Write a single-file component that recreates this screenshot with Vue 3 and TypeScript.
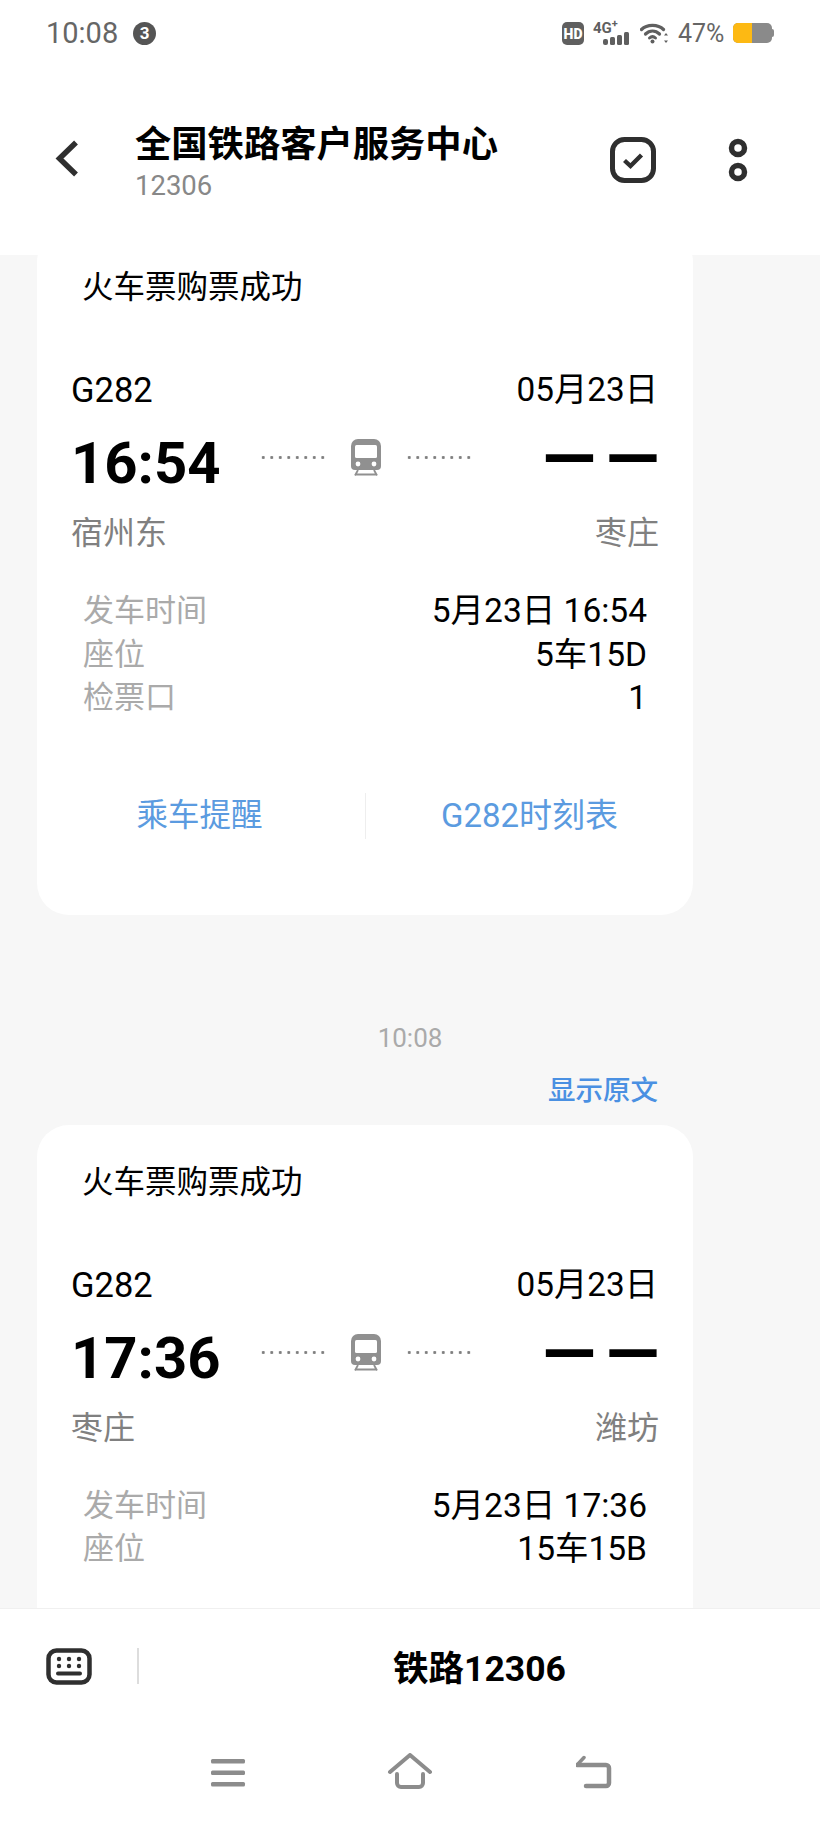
<template>
  <div class="phone">
    <header class="top">
      <div class="status">
        <div class="status-left">
          <span class="clock">10:08</span>
          <span class="badge">3</span>
        </div>
        <div class="status-right">
          <svg class="ic-hd" width="22" height="23" viewBox="0 0 22 23">
            <rect width="22" height="23" rx="5" fill="#5f5f5f" />
            <text x="11" y="16.5" text-anchor="middle" class="hd-text">HD</text>
          </svg>
          <div class="net">
            <span class="net-label">4G<sup>+</sup></span>
            <svg class="net-bars" width="27" height="13" viewBox="0 0 27 13">
              <rect x="0" y="7" width="5" height="6" rx="2" fill="#5f5f5f" />
              <rect x="7" y="5" width="5" height="8" rx="1.5" fill="#5f5f5f" />
              <rect x="14" y="3" width="5" height="10" rx="1.5" fill="#5f5f5f" />
              <rect x="21" y="0" width="5" height="13" rx="1.5" fill="#5f5f5f" />
            </svg>
          </div>
          <svg class="ic-wifi" width="28" height="21" viewBox="0 0 28 21" fill="none" stroke="#5f5f5f" stroke-linecap="round">
            <path d="M1.5 6.5C7 1 18 1 23.5 6.5" stroke-width="3.2" />
            <path d="M5.5 11C9.5 7 15.5 7 19.5 11" stroke-width="3.2" />
            <path d="M9.5 15C11.5 13.2 13.5 13.2 15.5 15" stroke-width="3" />
            <circle cx="12.5" cy="18.5" r="2" fill="#5f5f5f" stroke="none" />
            <path d="M26 10l-2 2.6h4zM26 20l-2-2.6h4z" fill="#5f5f5f" stroke="none" />
          </svg>
          <span class="percent">47%</span>
          <div class="battery"><div class="battery-fill" :style="{ width: '49%' }"></div></div>
        </div>
      </div>
      <div class="appbar">
        <svg class="back" width="24" height="37" viewBox="0 0 24 37" fill="none" stroke="#2f2f2f" stroke-width="5.5">
          <path d="M21 2.5L4.5 18.5L21 34.5" />
        </svg>
        <div class="who">
          <div class="who-name">全国铁路客户服务中心</div>
          <div class="who-num">12306</div>
        </div>
        <svg class="ic-check" width="46" height="46" viewBox="0 0 46 46" fill="none" stroke="#2f2f2f">
          <rect x="2.5" y="2.5" width="41" height="41" rx="12" stroke-width="5" />
          <path d="M14.5 23.5L20.5 29L31.5 18" stroke-width="4.4" />
        </svg>
        <svg class="ic-more" width="20" height="44" viewBox="0 0 20 44" fill="none" stroke="#2f2f2f" stroke-width="5.5">
          <circle cx="10" cy="10" r="6.5" />
          <circle cx="10" cy="34" r="6.5" />
        </svg>
      </div>
    </header>

    <main class="messages">
      <template v-for="(t, i) in tickets" :key="t.time">
        <template v-if="i > 0">
          <div class="msg-time">10:08</div>
          <div class="show-raw">显示原文</div>
        </template>
        <section class="card" :class="{ scrolled: i === 0 }">
          <div class="card-title">火车票购票成功</div>
          <div class="row head">
            <span class="train-no">G282</span>
            <span>05月23日</span>
          </div>
          <div class="row times">
            <span class="dep">{{ t.time }}</span>
            <div class="track">
              <span class="dots"></span>
              <svg class="train" width="32" height="37" viewBox="0 0 32 37">
                <path d="M8 0h16a7 7 0 0 1 7 7v20a4 4 0 0 1-4 4H5a4 4 0 0 1-4-4V7a7 7 0 0 1 7-7z" fill="#909090" />
                <rect x="5" y="6" width="22" height="13" rx="1.5" fill="#fff" />
                <circle cx="8" cy="25" r="2.4" fill="#fff" />
                <circle cx="24" cy="25" r="2.4" fill="#fff" />
                <path d="M8 31L5 36.5M24 31L27 36.5M5.5 35.5h21" stroke="#909090" stroke-width="1.8" fill="none" />
              </svg>
              <span class="dots"></span>
            </div>
            <span class="arr">——</span>
          </div>
          <div class="row stations">
            <span>{{ t.from }}</span>
            <span>{{ t.to }}</span>
          </div>
          <div class="details">
            <div v-for="d in t.details" :key="d[0]" class="detail">
              <span class="detail-key">{{ d[0] }}</span>
              <span class="detail-val">{{ d[1] }}</span>
            </div>
          </div>
          <div v-if="t.actions" class="actions">
            <span class="action remind">乘车提醒</span>
            <span class="action timetable">G282时刻表</span>
          </div>
        </section>
      </template>
    </main>

    <div class="menubar">
      <svg class="ic-kb" width="46" height="37" viewBox="0 0 46 37">
        <rect x="2.5" y="2.5" width="41" height="32" rx="8" fill="none" stroke="#2f2f2f" stroke-width="4.5" />
        <g fill="#2f2f2f">
          <circle cx="13" cy="11" r="2.2" /><circle cx="23" cy="11" r="2.2" /><circle cx="33" cy="11" r="2.2" />
          <circle cx="13" cy="18" r="2.2" /><circle cx="23" cy="18" r="2.2" /><circle cx="33" cy="18" r="2.2" />
          <rect x="10" y="23.5" width="26" height="4" rx="2" />
        </g>
      </svg>
      <div class="menu-line"></div>
      <div class="menu-item">铁路12306</div>
    </div>

    <nav class="navbar">
      <svg class="nav-menu" width="36" height="30" viewBox="0 0 36 30" fill="#8c8c8c">
        <rect x="1" y="1" width="34" height="4.5" rx="1.5" />
        <rect x="1" y="12.5" width="34" height="4.5" rx="1.5" />
        <rect x="1" y="24" width="34" height="4.5" rx="1.5" />
      </svg>
      <svg width="46" height="36" viewBox="0 0 46 36" fill="none" stroke="#8c8c8c" stroke-width="4" stroke-linecap="round" stroke-linejoin="round">
        <path d="M3 19L23 2L43 19" />
        <path d="M10 21V30a4 4 0 0 0 4 4H32a4 4 0 0 0 4-4V21" />
      </svg>
      <svg class="nav-back" width="36" height="34" viewBox="0 0 36 34" fill="none" stroke="#8c8c8c" stroke-width="4.5" stroke-linecap="round" stroke-linejoin="round">
        <path d="M1 10H30a3 3 0 0 1 3 3V28a3 3 0 0 1-3 3H10" />
        <path d="M8 2.5L1 10" stroke-width="3.5" />
      </svg>
    </nav>
  </div>
</template>

<script setup lang="ts">
type Ticket = {
  time: string
  from: string
  to: string
  details: [string, string][]
  actions: boolean
}

const tickets: Ticket[] = [
  {
    time: '16:54',
    from: '宿州东',
    to: '枣庄',
    details: [['发车时间', '5月23日 16:54'], ['座位', '5车15D'], ['检票口', '1']],
    actions: true,
  },
  {
    time: '17:36',
    from: '枣庄',
    to: '潍坊',
    details: [['发车时间', '5月23日 17:36'], ['座位', '15车15B']],
    actions: false,
  },
]
</script>

<style>
html, body { margin: 0; background: #fff; }
</style>

<style scoped>
.phone {
  width: 820px;
  height: 1822px;
  display: flex;
  flex-direction: column;
  overflow: hidden;
  background: #fff;
  font-family: Roboto, "Noto Sans CJK SC", sans-serif;
  color: #000;
}
.top { height: 255px; flex: none; }
.status {
  height: 66px;
  display: flex;
  justify-content: space-between;
  align-items: center;
  padding: 0 46px;
}
.status-left { display: flex; align-items: center; gap: 15px; }
.clock { font-size: 29px; color: #666; }
.badge {
  width: 23px;
  height: 23px;
  border-radius: 50%;
  background: #555;
  color: #fff;
  font-size: 17px;
  font-weight: 700;
  display: flex;
  align-items: center;
  justify-content: center;
}
.status-right { display: flex; align-items: center; }
.hd-text { font-size: 14px; font-weight: 900; fill: #fff; font-family: Roboto, sans-serif; }
.net { margin-left: 9px; width: 37px; height: 23px; position: relative; }
.net-label { position: absolute; left: 0; top: -2px; font-size: 15px; font-weight: 700; color: #5f5f5f; line-height: 16px; }
.net-label sup { font-size: 11px; line-height: 0; }
.net-bars { position: absolute; right: 0; bottom: 0; }
.ic-wifi { margin-left: 10px; }
.percent { margin-left: 10px; font-size: 25px; color: #666; width: 55px; }
.battery {
  width: 39px;
  height: 20px;
  margin-right: 2px;
  border-radius: 5px;
  background: #8a8a8a;
  position: relative;
}
.battery::after {
  content: "";
  position: absolute;
  left: 100%;
  top: 6px;
  width: 2px;
  height: 8px;
  border-radius: 0 2px 2px 0;
  background: #8a8a8a;
}
.battery-fill { height: 100%; background: #fdb913; border-radius: 5px 0 0 5px; }
.appbar {
  height: 189px;
  display: flex;
  align-items: flex-start;
  padding: 62px 0 0 55px;
}
.back { margin-top: 12px; flex: none; }
.who { margin-left: 56px; width: 475px; }
.who-name { font-size: 36.3px; font-weight: 700; line-height: 30px; margin-top: 2px; }
.who-num { font-size: 27.5px; color: #888; line-height: 30px; margin-top: 11px; }
.ic-check { margin-top: 9px; flex: none; }
.ic-more { margin-left: 72px; margin-top: 10px; flex: none; }
.messages {
  flex: 1;
  min-height: 0;
  overflow: hidden;
  background: #f7f7f7;
  padding: 0 37px;
}
.card {
  width: 656px;
  box-sizing: border-box;
  background: #fff;
  border-radius: 32px;
  padding: 38px 34px 76px;
}
.card.scrolled { margin-top: -25px; }
.card-title { font-size: 31.5px; line-height: 40px; padding-left: 11px; }
.row { display: flex; justify-content: space-between; align-items: center; }
.head { margin-top: 61px; font-size: 33.3px; line-height: 42px; padding-right: 1px; }
.train-no { font-size: 34.5px; }
.times { margin-top: 17px; height: 70px; position: relative; }
.dep { font-size: 58px; font-weight: 700; line-height: 70px; }
.track {
  position: absolute;
  left: 188px;
  top: 11px;
  width: 214px;
  display: flex;
  align-items: center;
  justify-content: space-between;
}
.dots {
  width: 68px;
  height: 3px;
  background: radial-gradient(circle, #808080 1.3px, transparent 1.6px) 0 0 / 8.5px 3px repeat-x;
}
.arr {
  font-size: 70px;
  font-weight: 700;
  line-height: 70px;
  letter-spacing: 10px;
  margin-right: -10px;
  margin-top: -8px;
}
.stations { margin-top: 15px; font-size: 32px; line-height: 40px; color: #808080; }
.details { margin-top: 36px; padding: 0 12px; }
.detail { display: flex; justify-content: space-between; line-height: 43.5px; height: 43.5px; }
.detail-key { color: #aaa; font-size: 31px; }
.detail-val { font-size: 33.5px; }
.actions { margin: 73px -34px 0; display: grid; grid-template-columns: 1fr 1fr; height: 46px; }
.action {
  color: #5b9be0;
  font-size: 31.5px;
  line-height: 46px;
  text-align: center;
}
.action.remind { padding-right: 3px; }
.action + .action { border-left: 1px solid #eee; }
.action.timetable { font-size: 33px; }
.msg-time { margin-top: 108px; text-align: center; font-size: 26px; line-height: 30px; color: #aaa; }
.show-raw { margin-top: 21px; margin-bottom: 17px; text-align: right; padding-right: 125px; font-size: 27.5px; line-height: 34px; font-weight: 500; color: #4a90e2; }
.menubar {
  height: 112px;
  flex: none;
  border-top: 1px solid #f0f0f0;
  box-sizing: border-box;
  display: flex;
  align-items: center;
  padding-left: 46px;
  background: #fff;
}
.ic-kb { margin-top: 4px; }
.menu-line { width: 2px; height: 36px; margin-left: 45px; margin-top: 2px; background: #ddd; }
.menu-item { flex: 1; text-align: center; font-size: 35.5px; font-weight: 700; margin-top: 1px; }
.navbar {
  height: 102px;
  flex: none;
  display: flex;
  justify-content: center;
  align-items: flex-start;
  gap: 143px;
  padding-top: 33px;
  box-sizing: border-box;
}
.nav-menu { margin: 5px -2px 0 2px; }
.nav-back { margin-top: 2px; }
</style>
